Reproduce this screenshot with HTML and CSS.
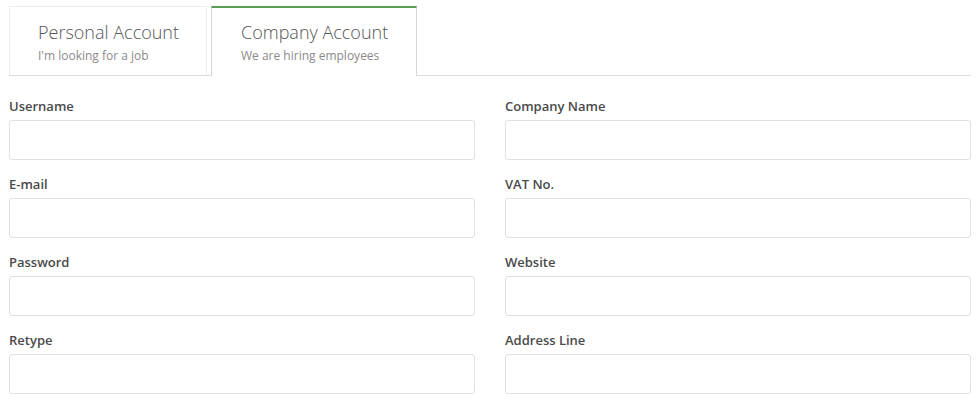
FILE: index.html
```html
<!DOCTYPE html>
<html>
<head>
<meta charset="utf-8">
<link rel="stylesheet" href="styles.css">
</head>
<body>
<div class="page">
  <div class="tabs">
    <div class="tab">
      <div class="tab-title">Personal Account</div>
      <div class="tab-sub">I'm looking for a job</div>
    </div>
    <div class="tab active">
      <div class="tab-title">Company Account</div>
      <div class="tab-sub">We are hiring employees</div>
    </div>
  </div>
  <form class="form">
    <div class="field"><label>Username</label><input type="text"></div>
    <div class="field"><label>Company Name</label><input type="text"></div>
    <div class="field"><label>E-mail</label><input type="text"></div>
    <div class="field"><label>VAT No.</label><input type="text"></div>
    <div class="field"><label>Password</label><input type="password"></div>
    <div class="field"><label>Website</label><input type="text"></div>
    <div class="field"><label>Retype</label><input type="password"></div>
    <div class="field"><label>Address Line</label><input type="text"></div>
  </form>
</div>
</body>
</html>
```
FILE: styles.css
```css
* { box-sizing: border-box; }
body {
  margin: 0;
  background: #fff;
  font-family: "Open Sans", "Liberation Sans", sans-serif;
  color: #333;
}
.page {
  padding: 6px 7px 0 9px;
}
.tabs {
  display: flex;
  align-items: flex-end;
  height: 70px;
  border-bottom: 1px solid #dcdcdc;
}
.tab {
  width: 198px;
  height: 69px;
  border: 1px solid #ececec;
  border-bottom: none;
  padding: 13px 0 0 28px;
  margin-right: 4px;
}
.tab.active {
  width: 206px;
  height: 70px;
  margin-bottom: -1px;
  background: #fff;
  border: 1px solid #d6d6d6;
  border-top: 2px solid #5b9f55;
  border-bottom: none;
  padding-top: 12px;
  padding-left: 29px;
}
.tab-title {
  font-size: 18px;
  font-weight: 300;
  color: #555;
  line-height: 24px;
}
.tab-sub {
  font-size: 12px;
  color: #8a8a8a;
  line-height: 18px;
  margin-top: 3px;
}
.form {
  display: grid;
  grid-template-columns: 466px 466px;
  column-gap: 30px;
  padding-top: 21px;
}
.field {
  display: flex;
  flex-direction: column;
  margin-bottom: 15px;
}
.field label {
  font-size: 13px;
  font-weight: 600;
  color: #4a4a4a;
  line-height: 18px;
  margin-bottom: 5px;
}
.field input {
  height: 40px;
  border: 1px solid #e0e0e0;
  border-radius: 3px;
  background: #fff;
  padding: 0 12px;
  font-family: inherit;
  font-size: 13px;
}
```
